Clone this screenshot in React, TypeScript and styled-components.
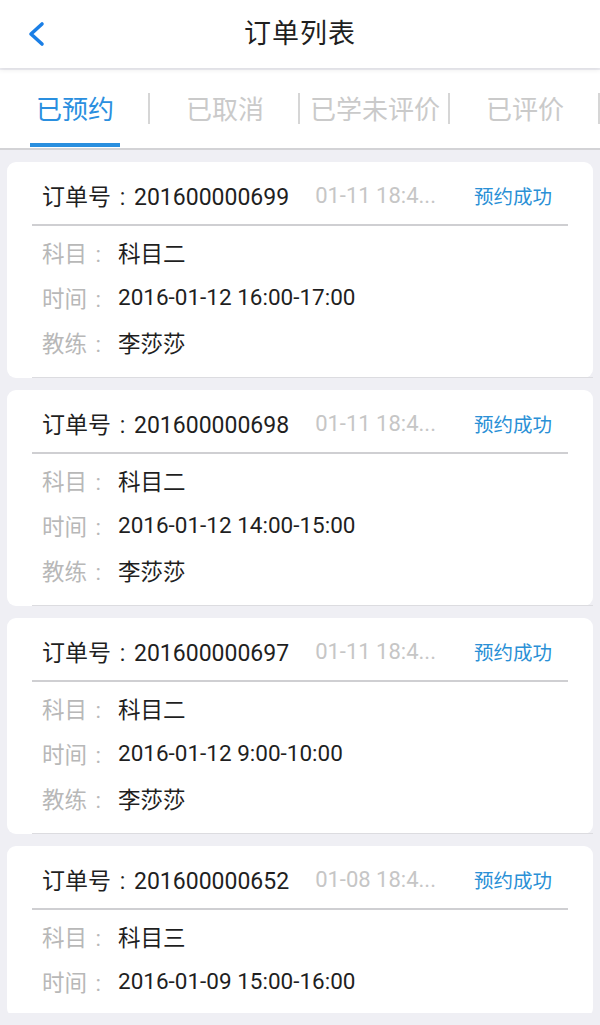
import styled, { createGlobalStyle } from 'styled-components'

const GlobalStyle = createGlobalStyle`
  html, body {
    margin: 0;
    padding: 0;
    background: #efeff4;
  }
  body {
    font-family: Roboto, "Noto Sans CJK SC", sans-serif;
    -webkit-font-smoothing: antialiased;
  }
`

const Page = styled.div`
  width: 600px;
  height: 1025px;
  display: flex;
  flex-direction: column;
  background: #efeff4;
  overflow: hidden;
`

const NavBar = styled.header`
  position: relative;
  z-index: 2;
  height: 68px;
  flex: none;
  display: grid;
  grid-template-columns: 80px 1fr 80px;
  align-items: center;
  background: #fff;
  box-shadow: 0 2px 5px rgba(0, 0, 0, 0.08);

  > .back {
    display: flex;
    align-items: center;
    padding-left: 27px;
    height: 100%;
  }
  > .title {
    text-align: center;
    font-size: 27px;
    color: #1f1f1f;
    letter-spacing: 1px;
    padding-bottom: 6px;
  }
`

const TabBar = styled.nav`
  flex: none;
  height: 80px;
  margin-top: 2px;
  display: grid;
  grid-template-columns: repeat(4, 150px);
  background: #fff;
  border-bottom: 2px solid #d3d3d6;
  box-sizing: border-box;
`

const Tab = styled.div<{ $active?: boolean }>`
  position: relative;
  display: flex;
  align-items: center;
  justify-content: center;
  font-size: 26px;
  line-height: 1;
  color: ${(p) => (p.$active ? '#2a8fdf' : '#cacaca')};
  padding-top: 2px;

  &::after {
    content: '';
    position: absolute;
    right: 0;
    top: 23px;
    height: 31px;
    width: 2px;
    background: #d6d6d6;
  }
  &::before {
    content: '';
    display: ${(p) => (p.$active ? 'block' : 'none')};
    position: absolute;
    left: 30px;
    right: 30px;
    bottom: 1px;
    height: 4px;
    background: #2a8fdf;
  }
`

const List = styled.main`
  flex: none;
  height: 863px;
  overflow: hidden;
  padding: 12px 7px 0;
  box-sizing: border-box;
  display: flex;
  flex-direction: column;
  gap: 12px;
`

const Card = styled.section`
  flex: none;
  background: #fff;
  border-radius: 9px;
  padding: 0 25px;

  > .head {
    height: 64px;
    box-sizing: border-box;
    display: flex;
    align-items: center;
    padding: 4px 16px 0 10px;
    border-bottom: 2px solid #cfcfd2;
  }
  > .rows {
    padding: 3px 0 13px 10px;
    margin-right: -25px;
    border-bottom: 1px solid #dcdce0;
  }
`

const Colon = styled.span`
  display: inline-block;
  width: 1em;
  text-align: center;
`

const OrderNo = styled.span`
  font-size: 23px;
  color: #1f1f1f;
  white-space: nowrap;
`

const OrderTime = styled.span`
  margin-left: 26px;
  font-size: 22px;
  color: #c6c6c6;
  white-space: nowrap;
`

const Status = styled.span`
  margin-left: auto;
  font-size: 19.5px;
  color: #2a90d6;
  white-space: nowrap;
`

const Row = styled.div`
  height: 45px;
  display: flex;
  align-items: center;
  font-size: 22.5px;

  > .label {
    width: 76px;
    color: #b8b8b8;
    white-space: nowrap;
  }
  > .value {
    color: #1f1f1f;
  }
`

function BackIcon() {
  return (
    <svg width="18" height="26" viewBox="0 0 18 26">
      <polyline
        points="15,3 4,13 15,23"
        fill="none"
        stroke="#1b7fe6"
        strokeWidth="3.6"
        strokeLinecap="round"
        strokeLinejoin="round"
      />
    </svg>
  )
}

const tabs = ['已预约', '已取消', '已学未评价', '已评价']

type Order = {
  no: string
  time: string
  subject: string
  date: string
  coach?: string
}

// time is shown already shortened, as the list cell does
const orders: Order[] = [
  { no: '201600000699', time: '01-11 18:4...', subject: '科目二', date: '2016-01-12 16:00-17:00', coach: '李莎莎' },
  { no: '201600000698', time: '01-11 18:4...', subject: '科目二', date: '2016-01-12 14:00-15:00', coach: '李莎莎' },
  { no: '201600000697', time: '01-11 18:4...', subject: '科目二', date: '2016-01-12 9:00-10:00', coach: '李莎莎' },
  // last card runs past the bottom of the screen, only two rows show
  { no: '201600000652', time: '01-08 18:4...', subject: '科目三', date: '2016-01-09 15:00-16:00' },
]

function InfoRow({ label, value }: { label: string; value: string }) {
  return (
    <Row>
      <span className="label">
        {label}
        <Colon>:</Colon>
      </span>
      <span className="value">{value}</span>
    </Row>
  )
}

export default function App() {
  return (
    <Page>
      <GlobalStyle />
      <NavBar>
        <div className="back">
          <BackIcon />
        </div>
        <div className="title">订单列表</div>
        <div />
      </NavBar>
      <TabBar>
        {tabs.map((t, i) => (
          <Tab key={t} $active={i === 0}>
            {t}
          </Tab>
        ))}
      </TabBar>
      <List>
        {orders.map((o) => (
          <Card key={o.no}>
            <div className="head">
              <OrderNo>
                订单号<Colon>:</Colon>
                {o.no}
              </OrderNo>
              <OrderTime>{o.time}</OrderTime>
              <Status>预约成功</Status>
            </div>
            <div className="rows">
              <InfoRow label="科目" value={o.subject} />
              <InfoRow label="时间" value={o.date} />
              {o.coach ? <InfoRow label="教练" value={o.coach} /> : null}
            </div>
          </Card>
        ))}
      </List>
    </Page>
  )
}
